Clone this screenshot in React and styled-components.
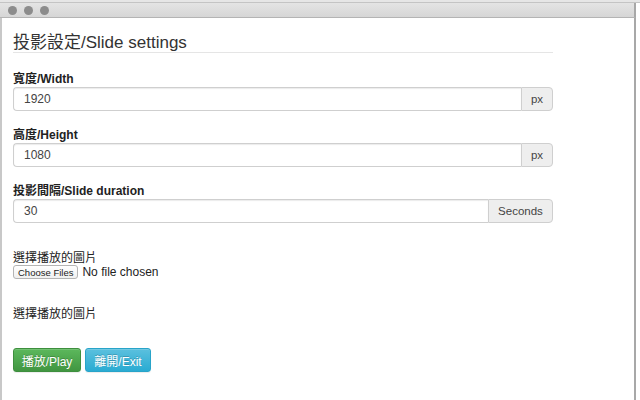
import React from "react";
import styled, { createGlobalStyle } from "styled-components";

const Global = createGlobalStyle`
  html, body { margin: 0; padding: 0; background: #fff; }
  body { font-family: "Liberation Sans", Arial, "Noto Sans CJK TC", sans-serif; color: #333; }
`;

const Frame = styled.div`
  width: 640px;
  height: 400px;
  display: flex;
  flex-direction: column;
  overflow: hidden;
  background: #fff;
`;

const TopStrip = styled.div`
  height: 2px;
  background: #e6e6e6;
  border-bottom: 1px solid #c4c4c4;
`;

const TitleBar = styled.div`
  height: 15px;
  width: 636px;
  display: flex;
  align-items: center;
  gap: 7px;
  padding-left: 8px;
  box-sizing: border-box;
  background: linear-gradient(#e4e4e4, #d6d6d6);
  border-bottom: 1px solid #b4b4b4;
  border-right: 2px solid #a8a8a8;
`;

const Light = styled.span`
  width: 9px;
  height: 9px;
  border-radius: 50%;
  background: #8c8c8c;
`;

const Window = styled.div`
  flex: 1;
  width: 636px;
  box-sizing: border-box;
  border-left: 2px solid #c8c8c8;
  border-right: 2px solid #a8a8a8;
  padding: 16px 0 0 11px;
`;

const Form = styled.div`
  width: 540px;
`;

const Heading = styled.h1`
  margin: 0 0 19px;
  font-size: 17px;
  line-height: 18px;
  font-weight: normal;
  color: #333;
  padding-bottom: 0;
  border-bottom: 1px solid #e5e5e5;
`;

const Group = styled.div`
  margin-bottom: ${(p) => p.$mb || 17}px;
`;

const Label = styled.div`
  font-size: 12px;
  line-height: 14px;
  font-weight: ${(p) => (p.$bold ? "bold" : "normal")};
  margin-bottom: ${(p) => (p.$bold ? 1 : 0)}px;
  color: #222;
`;

const InputGroup = styled.div`
  display: flex;
  height: 24px;
`;

const Input = styled.input`
  flex: 1;
  min-width: 0;
  box-sizing: border-box;
  height: 24px;
  border: 1px solid #cfcfcf;
  border-right: none;
  border-radius: 4px 0 0 4px;
  box-shadow: inset 0 1px 1px rgba(0, 0, 0, 0.08);
  padding: 0 10px;
  font-family: inherit;
  font-size: 12px;
  color: #444;
  background: #fff;
  outline: none;
`;

const Addon = styled.span`
  box-sizing: border-box;
  width: ${(p) => p.$w}px;
  display: flex;
  align-items: center;
  justify-content: center;
  border: 1px solid #cfcfcf;
  border-radius: 0 4px 4px 0;
  background: #eee;
  font-size: 11.5px;
  color: #444;
`;

const FileRow = styled.div`
  display: flex;
  align-items: center;
  gap: 4px;
  height: 14px;
`;

const FileButton = styled.span`
  box-sizing: border-box;
  height: 14px;
  padding: 0 4px;
  display: flex;
  align-items: center;
  border: 1px solid #b4b4b4;
  border-radius: 3px;
  background: linear-gradient(#fff, #f0f0f0);
  font-size: 9.5px;
  color: #222;
`;

const FileText = styled.span`
  font-size: 12px;
  color: #222;
`;

const Buttons = styled.div`
  display: flex;
  gap: 4px;
`;

const Btn = styled.button`
  box-sizing: border-box;
  height: 24px;
  width: ${(p) => p.$w}px;
  padding: 0;
  border-radius: 3px;
  font-family: inherit;
  font-size: 12px;
  color: #fff;
  text-shadow: 0 -1px 0 rgba(0, 0, 0, 0.2);
  border: 1px solid ${(p) => (p.$variant === "play" ? "#3e8f3e" : "#28a4c9")};
  background: ${(p) =>
    p.$variant === "play"
      ? "linear-gradient(#5cb85c, #419641)"
      : "linear-gradient(#5bc0de, #2aabd2)"};
  box-shadow: inset 0 1px 0 rgba(255, 255, 255, 0.15), 0 1px 1px rgba(0, 0, 0, 0.075);
`;

export default function App() {
  return (
    <>
      <Global />
      <Frame>
        <TopStrip />
        <TitleBar>
          <Light />
          <Light />
          <Light />
        </TitleBar>
        <Window>
          <Form>
            <Heading>投影設定/Slide settings</Heading>
            <Group>
              <Label $bold>寬度/Width</Label>
              <InputGroup>
                <Input defaultValue="1920" />
                <Addon $w={32}>px</Addon>
              </InputGroup>
            </Group>
            <Group>
              <Label $bold>高度/Height</Label>
              <InputGroup>
                <Input defaultValue="1080" />
                <Addon $w={32}>px</Addon>
              </InputGroup>
            </Group>
            <Group $mb={28}>
              <Label $bold>投影間隔/Slide duration</Label>
              <InputGroup>
                <Input defaultValue="30" />
                <Addon $w={65}>Seconds</Addon>
              </InputGroup>
            </Group>
            <Group $mb={28}>
              <Label>選擇播放的圖片</Label>
              <FileRow>
                <FileButton>Choose Files</FileButton>
                <FileText>No file chosen</FileText>
              </FileRow>
            </Group>
            <Group $mb={27}>
              <Label>選擇播放的圖片</Label>
            </Group>
            <Buttons>
              <Btn $variant="play" $w={68}>播放/Play</Btn>
              <Btn $variant="exit" $w={66}>離開/Exit</Btn>
            </Buttons>
          </Form>
        </Window>
      </Frame>
    </>
  );
}
